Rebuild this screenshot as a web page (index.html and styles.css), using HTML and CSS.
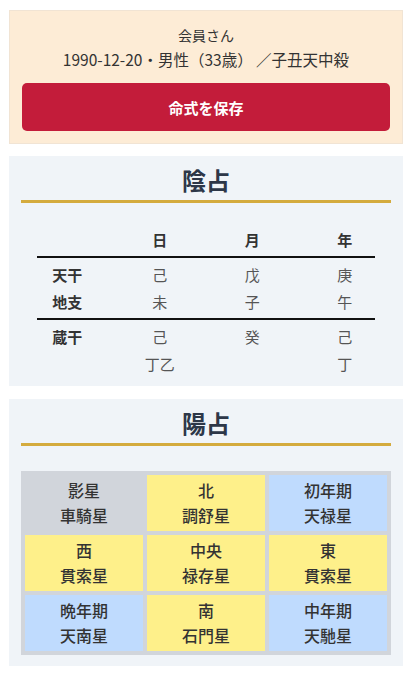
FILE: index.html
```html
<!DOCTYPE html>
<html lang="ja">
<head>
<meta charset="utf-8">
<title>命式</title>
<link rel="stylesheet" href="styles.css">
</head>
<body>
<div class="page">
  <section class="card profile">
    <div class="name">会員さん</div>
    <div class="info">1990-12-20・男性（33歳） ／子丑天中殺</div>
    <button class="save">命式を保存</button>
  </section>

  <section class="card panel">
    <h2 class="title">陰占</h2>
    <div class="pillars">
      <div class="th"></div><div class="th">日</div><div class="th">月</div><div class="th">年</div>
      <div class="rule"></div>
      <div class="lbl">天干</div><div class="td">己</div><div class="td">戊</div><div class="td">庚</div>
      <div class="lbl">地支</div><div class="td">未</div><div class="td">子</div><div class="td">午</div>
      <div class="rule"></div>
      <div class="lbl">蔵干</div><div class="td">己</div><div class="td">癸</div><div class="td">己</div>
      <div class="lbl"></div><div class="td">丁乙</div><div class="td"></div><div class="td">丁</div>
    </div>
  </section>

  <section class="card panel">
    <h2 class="title">陽占</h2>
    <div class="stars">
      <div class="cell gray">影星<br>車騎星</div>
      <div class="cell yellow">北<br>調舒星</div>
      <div class="cell blue">初年期<br>天禄星</div>
      <div class="cell yellow">西<br>貫索星</div>
      <div class="cell yellow">中央<br>禄存星</div>
      <div class="cell yellow">東<br>貫索星</div>
      <div class="cell blue">晩年期<br>天南星</div>
      <div class="cell yellow">南<br>石門星</div>
      <div class="cell blue">中年期<br>天馳星</div>
    </div>
  </section>
</div>
</body>
</html>
```

FILE: styles.css
```css
* { box-sizing: border-box; }

html, body {
  margin: 0;
  padding: 0;
  background: #ffffff;
}

body {
  font-family: "Noto Sans CJK JP", "Noto Sans", sans-serif;
  color: #333333;
}

.page {
  width: 414px;
  padding: 10px 11px 0 9px;
  display: flex;
  flex-direction: column;
  gap: 12px;
}

.card {
  width: 394px;
}

.profile {
  background: #fdecd6;
  border: 1px solid #f1e4d4;
  padding: 12px;
  text-align: center;
  display: flex;
  flex-direction: column;
}

.name {
  font-size: 14px;
  line-height: 24px;
  color: #333333;
}

.info {
  font-size: 15.5px;
  line-height: 24px;
  color: #333333;
}

.save {
  margin-top: 12px;
  height: 48px;
  border: none;
  border-radius: 5px;
  background: #c31c3a;
  color: #ffffff;
  font-family: "Noto Sans CJK JP", "Noto Sans", sans-serif;
  font-size: 15px;
  font-weight: 700;
  width: 100%;
}

.panel {
  background: #f0f4f8;
  padding: 8px 12px 10px;
}

.panel + .panel {
  margin-top: 1px;
  padding-bottom: 11px;
}

.title {
  margin: 0;
  font-size: 24px;
  line-height: 32px;
  font-weight: 700;
  text-align: center;
  color: #2d3748;
  padding-bottom: 4px;
  border-bottom: 3px solid #d4ab3e;
}

.pillars {
  margin-top: 23px;
  display: grid;
  grid-template-columns: repeat(4, 1fr);
  text-align: center;
  font-size: 15px;
  line-height: 27px;
  height: 150px;
}

.th, .lbl {
  font-weight: 700;
  color: #333333;
}

.td {
  color: #555555;
}

.rule {
  grid-column: 1 / -1;
  height: 2px;
  background: #111111;
  margin: 3px 16px;
}

.stars {
  margin-top: 25px;
  background: #d1d5db;
  padding: 4px;
  display: grid;
  grid-template-columns: repeat(3, 1fr);
  gap: 4px;
}

.cell {
  height: 56px;
  padding-top: 3px;
  text-align: center;
  font-size: 16px;
  line-height: 25px;
  font-weight: 500;
  color: #333333;
}

.gray { background: #d1d5db; }
.yellow { background: #fef08a; }
.blue { background: #bfdbfe; }
```
